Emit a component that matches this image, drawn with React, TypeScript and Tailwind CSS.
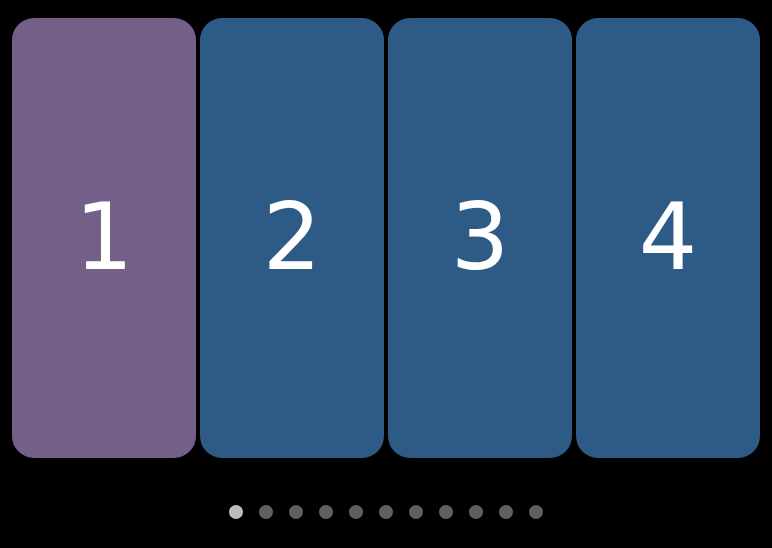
export default function App() {
  const cards = [
    { n: 1, bg: "bg-[#735f88]" },
    { n: 2, bg: "bg-[#2e5b86]" },
    { n: 3, bg: "bg-[#2e5b86]" },
    { n: 4, bg: "bg-[#2e5b86]" },
  ];
  const dots = Array.from({ length: 11 }, (_, i) => i);
  return (
    <div className="w-[772px] h-[548px] bg-black flex flex-col" style={{ fontFamily: '"DejaVu Sans", sans-serif' }}>
      <div className="flex gap-[4px] px-[12px] pt-[18px]">
        {cards.map((c) => (
          <div
            key={c.n}
            className={`${c.bg} w-[184px] h-[440px] rounded-[22px] flex items-center justify-center text-white text-[92px] leading-none`}
          >
            {c.n}
          </div>
        ))}
      </div>
      <div className="flex justify-center gap-[16px] mt-[47px]">
        {dots.map((i) => (
          <div
            key={i}
            className={`w-[14px] h-[14px] rounded-full ${i === 0 ? "bg-[#bcbcbc]" : "bg-[#5f5f5f]"}`}
          />
        ))}
      </div>
    </div>
  );
}
